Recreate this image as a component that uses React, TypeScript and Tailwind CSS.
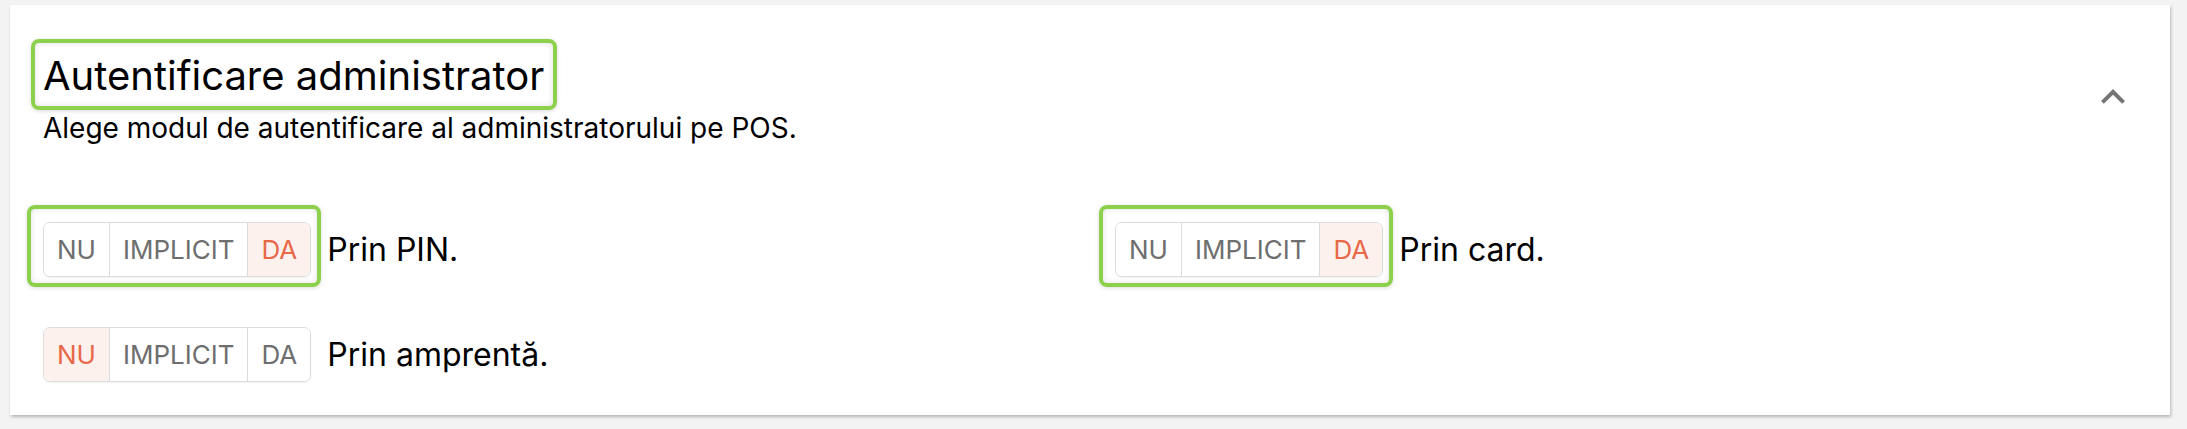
type Choice = 'NU' | 'IMPLICIT' | 'DA';

interface AuthOption {
  label: string;
  value: Choice;
  marked?: boolean;
}

const options: AuthOption[] = [
  { label: 'Prin PIN.', value: 'DA', marked: true },
  { label: 'Prin card.', value: 'DA', marked: true },
  { label: 'Prin amprentă.', value: 'NU' },
];

const choices: Choice[] = ['NU', 'IMPLICIT', 'DA'];

// green focus ring drawn over a highlighted control
function Marker({ className }: { className: string }) {
  return (
    <div
      className={
        'pointer-events-none absolute rounded-[8px] border-[4px] border-[#8cd04c] shadow-[inset_0_0_6px_rgba(0,0,0,0.12),0_1px_4px_rgba(0,0,0,0.15)] ' +
        className
      }
    />
  );
}

function TriToggle({ value }: { value: Choice }) {
  return (
    <div className="flex h-[55px] rounded-[7px] border border-[#dcdcdc] shadow-[0_1px_2px_rgba(0,0,0,0.06)] overflow-hidden">
      {choices.map((c, i) => (
        <div
          key={c}
          className={
            (i > 0 ? 'border-l border-[#dcdcdc] ' : '') +
            (c === value ? 'bg-[#fdf1ee] text-[#e8684a] ' : 'bg-white text-[#6e6e6e] ') +
            'flex items-center px-[13px] text-[26px]'
          }
        >
          {c}
        </div>
      ))}
    </div>
  );
}

function ExpandLess() {
  return (
    <svg viewBox="0 0 24 24" className="mt-[21px] h-[48px] w-[48px] shrink-0" fill="#757575">
      <path d="M12 8l-6 6 1.41 1.41L12 10.83l4.59 4.58L18 14z" />
    </svg>
  );
}

export default function App() {
  return (
    <div className="min-h-[429px] bg-[#f3f3f3] pt-[5px] pl-[10px] pr-[17px] pb-[13px] font-['Inter',sans-serif]">
      <div className="bg-white shadow-[1px_2px_3px_rgba(0,0,0,0.25)] px-[33px] pt-[47px] pb-[33px]">
        <div className="flex items-start justify-between">
          <div>
            <div className="relative inline-block">
              <h2 className="text-[40px] leading-[48px] text-black">Autentificare administrator</h2>
              <Marker className="-left-[12px] -right-[13px] -top-[13px] -bottom-[10px]" />
            </div>
            <p className="mt-[11px] text-[28px] leading-[34px] text-black">
              Alege modul de autentificare al administratorului pe POS.
            </p>
          </div>
          <ExpandLess />
        </div>

        <div className="mt-[77px] grid grid-cols-2 gap-x-[50px] gap-y-[50px]">
          {options.map((o) => (
            <div key={o.label} className="flex items-center gap-[16px]">
              <div className="relative">
                <TriToggle value={o.value} />
                {o.marked && <Marker className="-left-[16px] -right-[10px] -top-[17px] -bottom-[10px]" />}
              </div>
              <span className="text-[32px] leading-[40px] text-black">{o.label}</span>
            </div>
          ))}
        </div>
      </div>
    </div>
  );
}
